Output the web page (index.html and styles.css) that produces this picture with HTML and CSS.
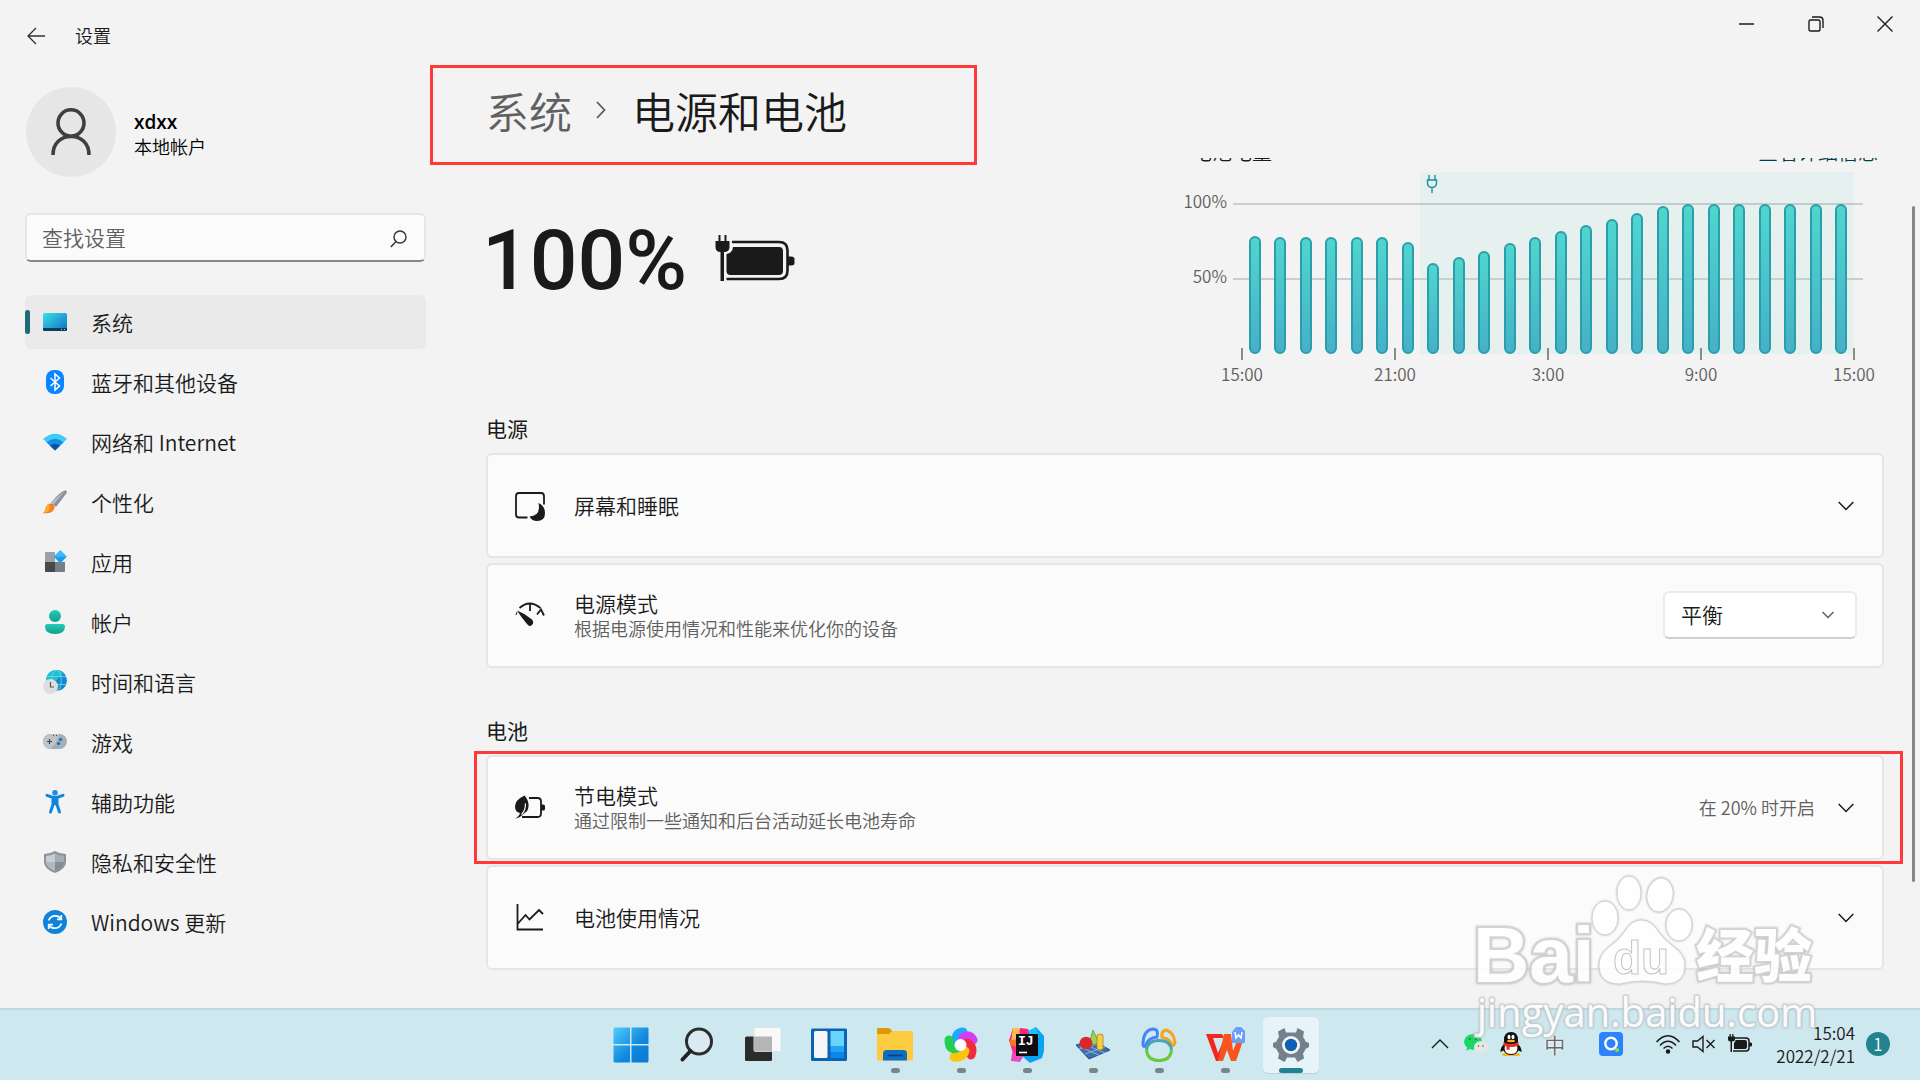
FILE: index.html
```
<!DOCTYPE html>
<html lang="zh-CN">
<head>
  <meta charset="UTF-8">
  <meta name="viewport" content="width=device-width, initial-scale=1.0">
  <title>设置</title>
  <link rel="stylesheet" href="styles.css">
</head>
<body>
  <div class="window">
    <header class="titlebar">
      <button class="back" aria-label="返回">
        <svg width="20" height="18" viewBox="0 0 20 18"><path d="M10 1 2 9l8 8M2 9h17" fill="none" stroke="#333" stroke-width="1.3"/></svg>
      </button>
      <span class="app-title">设置</span>
      <div class="controls">
        <button aria-label="最小化"><svg width="16" height="16"><path d="M0 8h15" stroke="#1a1a1a" stroke-width="1.5"/></svg></button>
        <button aria-label="还原"><svg width="16" height="16" fill="none" stroke="#1a1a1a" stroke-width="1.4"><rect x="1" y="4" width="11" height="11" rx="1.5"/><path d="M4 1h7.500q3.500 0 3.500 3.500V12"/></svg></button>
        <button aria-label="关闭"><svg width="16" height="16"><path d="M.5.5l15 15M15.500.5l-15 15" stroke="#1a1a1a" stroke-width="1.4"/></svg></button>
      </div>
    </header>

    <div class="body">
      <aside class="sidebar">
        <div class="user">
          <div class="avatar">
            <svg width="42" height="48" viewBox="0 0 42 48" fill="none" stroke="#3f3f3f" stroke-width="3.600"><ellipse cx="21" cy="15" rx="13" ry="13.200"/><path d="M3 47c0-12 8-18.500 18-18.500S39 35 39 47"/></svg>
          </div>
          <div>
            <div class="user-name">xdxx</div>
            <div class="user-type">本地帐户</div>
          </div>
        </div>

        <form class="search">
          <input type="text" placeholder="查找设置" aria-label="查找设置">
          <svg width="17" height="18" viewBox="0 0 17 18" fill="none" stroke="#333" stroke-width="1.400"><circle cx="10" cy="7" r="6"/><path d="M6 11.500.8 17"/></svg>
        </form>

        <nav>
          <a href="#" class="active">
            <svg width="24" height="24" viewBox="0 0 24 24"><defs><linearGradient id="sys" x1="0" y1="0" x2="1" y2="1"><stop offset="0" stop-color="#3de0e8"/><stop offset="1" stop-color="#0a6fc2"/></linearGradient></defs><rect y="3" width="24" height="18" rx="1.500" fill="url(#sys)"/><path d="M0 18h24v1.500q0 1.500-1.500 1.500h-21Q0 21 0 19.500z" fill="#0b3c5d"/><path d="M18 19.500h1M21 19.500h1" stroke="#9fd8ee"/></svg>
            系统</a>
          <a href="#">
            <svg width="24" height="24" viewBox="0 0 24 24"><rect x="3" width="18" height="24" rx="8" fill="#0a84ff"/><path d="m7.500 8 9 8-4.500 4V4l4.500 4-9 8" fill="none" stroke="#fff" stroke-width="1.500"/></svg>
            蓝牙和其他设备</a>
          <a href="#">
            <svg width="24" height="24" viewBox="0 0 24 24"><path d="M0 9q12-10.500 24 0L12 20.500z" fill="#3fcbf7"/><path d="M3.500 12.300q8.500-7 17 0L12 20.500z" fill="#1490df"/><path d="M7 15.700q5-4 10 0l-5 4.800z" fill="#0c55a3"/></svg>
            网络和 Internet</a>
          <a href="#">
            <svg width="24" height="24" viewBox="0 0 24 24"><path d="M22.500.3q2 .7 1 3L13 17l-5-4.500Q18 1 22.500.3z" fill="#87929c"/><path d="M22.500.3 8 12.500l2.500 2z" fill="#b6bec6"/><path d="M8 13.500q3.500.5 3.500 4Q11 24 0 23.300q2-1.300 2.500-5 1-5 5.500-4.800z" fill="#f5811e"/><path d="M6 14q-3 1-3.500 4.500Q2 22 0 23.300 9 22 6 14z" fill="#fbb034"/></svg>
            个性化</a>
          <a href="#">
            <svg width="24" height="24" viewBox="0 0 24 24"><path d="M2 3q0-1 1-1h9v10H2z" fill="#99a1a9"/><path d="M2 12h10v10H3q-1 0-1-1z" fill="#44494d"/><path d="M12 12h10v9q0 1-1 1h-9z" fill="#777e86"/><path d="m17.300.3 6.500 6.500-6.500 6.700-6.500-6.700z" fill="#1e9fea"/><path d="m17.300.3 6.500 6.500H10.800z" fill="#3cbcf5"/></svg>
            应用</a>
          <a href="#">
            <svg width="24" height="24" viewBox="0 0 24 24"><defs><linearGradient id="acc" x1="0" y1="0" x2="0" y2="1"><stop offset="0" stop-color="#24cdb4"/><stop offset="1" stop-color="#129e8c"/></linearGradient></defs><circle cx="12" cy="6" r="6" fill="url(#acc)"/><path d="M4.500 14h15q2.500 0 2.500 2.500 0 7.500-10 7.500T2 16.500Q2 14 4.500 14z" fill="url(#acc)"/></svg>
            帐户</a>
          <a href="#">
            <svg width="24" height="24" viewBox="0 0 24 24"><circle cx="13.500" cy="10.500" r="10.500" fill="#1688cf"/><path d="M13.500 0Q3 1 3 10.500h10L21 3q-3-3-7.500-3z" fill="#20bfd2"/><g fill="none" stroke="#5bd9ea" stroke-width=".9"><ellipse cx="13.500" cy="10.500" rx="4.800" ry="10.300"/><path d="M4 6.500h19M4 14.500h19"/></g><circle cx="7.500" cy="16.500" r="7.500" fill="#dedede"/><path d="M7.500 12v5H11" fill="none" stroke="#555" stroke-width="1.200"/></svg>
            时间和语言</a>
          <a href="#">
            <svg width="24" height="24" viewBox="0 0 24 24"><rect y="4" width="24" height="15" rx="7.500" fill="#a5adb5"/><path d="M7.500 4q-7 0-7.500 7.500Q.5 19 7.500 19 15 12 16 4z" fill="#bcc3c9"/><path d="M4 11.500h5M6.500 9v5" stroke="#444" stroke-width="1.200"/><circle cx="17.500" cy="9.500" r="1.600" fill="#0a6fc2"/><circle cx="15.500" cy="13.500" r="1.600" fill="#0a6fc2"/><path d="M10 5.500h1M13 5.500h1" stroke="#444"/></svg>
            游戏</a>
          <a href="#">
            <svg width="24" height="24" viewBox="0 0 24 24"><circle cx="12" cy="2.800" r="2.800" fill="#1a8fe3"/><path d="M4 5.300 10 7.500h4l6-2.200M10 8v6.500L7.500 22M14 8v6.500l2.500 7.500" fill="none" stroke="#0f86dd" stroke-width="3" stroke-linecap="round"/><path d="M9 7h6v9l-3-1-3 1z" fill="#0f86dd"/></svg>
            辅助功能</a>
          <a href="#">
            <svg width="24" height="24" viewBox="0 0 24 24"><path d="M12 1q5 3 11 3v8q0 7-11 11Q1 19 1 12V4q6 0 11-3z" fill="#8b949c"/><path d="M12 3.500q4 2.300 9 2.500v6q0 5.500-9 9z" fill="#a5acb4"/><path d="M12 3.500Q8 5.800 3 6v6h9z" fill="#c8cdd4"/><path d="M3 12h9v9q-9-3.500-9-9z" fill="#b3b9c1"/><path d="M12 12h9q0 5.500-9 9z" fill="#858d95"/></svg>
            隐私和安全性</a>
          <a href="#">
            <svg width="24" height="24" viewBox="0 0 24 24"><circle cx="12" cy="12" r="12" fill="#0f83dc"/><g fill="none" stroke="#fff" stroke-width="1.700"><path d="M5.500 10.500Q7.500 5.800 12.500 5.800q3.500 0 5.500 3M18.500 13.500q-2 4.700-7 4.700-3.500 0-5.500-3"/><path d="M18.300 5v4.300H14M5.700 19v-4.300H10"/></g></svg>
            Windows 更新</a>
        </nav>
      </aside>

      <main>
        <h1 class="breadcrumb">
          <a href="#">系统</a>
          <svg width="12" height="18" viewBox="0 0 12 18"><path d="m2 1 7.500 8L2 17" fill="none" stroke="#5a5a5a" stroke-width="1.800"/></svg>
          <span>电源和电池</span>
        </h1>

        <div class="scroll">
          <div class="hero">
            <div class="level">
              <span>100%</span>
              <svg width="80" height="46" viewBox="0 0 80 46"><path d="M17 7h47q8.500 0 8.500 8.500v20q0 8.500-8.500 8.500H11.500" fill="none" stroke="#1a1a1a" stroke-width="2.600"/><path d="M72.500 21.500H76q3.500 0 3.500 2.500v4q0 2.500-3.500 2.500h-3.500z" fill="#1a1a1a"/><path d="M18 12h46q4 0 4 4v20q0 4-4 4H15.500q-4 0-4-4V19q6-1 6.500-7z" fill="#1a1a1a"/><path d="M3.500 0v6H.5v6q0 5 5 5V46H9V17q5.500 0 5.500-5V6h-3V0h-2v6h-4V0z" fill="#1a1a1a"/></svg>
            </div>
            <div class="chart">
              <div class="chart-head">
                <span>电池电量</span>
                <a href="#">查看详细信息</a>
              </div>
              <div class="chart-area">
                <div class="y-axis"><span>100%</span><span>50%</span></div>
                <div class="plot">
                  <div class="charging">
                    <svg width="12" height="18" viewBox="0 0 12 18" fill="none" stroke="#1a8fa5" stroke-width="1.400"><path d="M3 0v5M9 0v5M1.500 5h9v3q0 4.500-4.500 4.500T1.500 8zM6 12.500V18"/></svg>
                  </div>
                  <div class="bars">
                    <i style="height:79%"></i><i style="height:78%"></i><i style="height:78%"></i><i style="height:78%"></i>
                    <i style="height:78%"></i><i style="height:78%"></i><i style="height:75%"></i><i style="height:61%"></i>
                    <i style="height:65%"></i><i style="height:69%"></i><i style="height:74%"></i><i style="height:78%"></i>
                    <i style="height:82%"></i><i style="height:86%"></i><i style="height:90%"></i><i style="height:94%"></i>
                    <i style="height:99%"></i><i style="height:100%"></i><i style="height:100%"></i><i style="height:100%"></i>
                    <i style="height:100%"></i><i style="height:100%"></i><i style="height:100%"></i><i style="height:100%"></i>
                  </div>
                </div>
              </div>
              <div class="x-axis"><span>15:00</span><span>21:00</span><span>3:00</span><span>9:00</span><span>15:00</span></div>
            </div>
          </div>

          <h2>电源</h2>
          <section class="cards">
            <button class="card">
              <svg class="card-icon" width="30" height="30" viewBox="0 0 30 30"><path d="M12.500 26.500H4Q1 26.500 1 23.500V5q0-3 3-3h22q3 0 3 3v8.500" fill="none" stroke="#1a1a1a" stroke-width="1.800"/><path d="M23.500 12q6.500 3 6.500 10 0 8-8 8-5 0-7.500-4.500Q26 25 23.500 12z" fill="#1a1a1a"/></svg>
              <span class="card-text">屏幕和睡眠</span>
              <svg class="chevron" width="16" height="10" viewBox="0 0 16 10"><path d="m.7 1 7.300 7.500L15.300 1"/></svg>
            </button>
            <div class="card">
              <svg class="card-icon" width="30" height="30" viewBox="0 0 30 30" fill="none" stroke="#1a1a1a" stroke-width="1.800"><path d="M4.500 7Q14.500-2 25.500 7M15 3v7M29 14.500l-3-6-4 5"/><path d="M1 14l1-3" stroke-width="1"/><path d="M2 9.500q8 3 15 9 2.500 3 0 5.500t-5-1Q6 16 2 9.500z" fill="#1a1a1a" stroke="none"/></svg>
              <label class="card-text" for="mode">电源模式<small>根据电源使用情况和性能来优化你的设备</small></label>
              <div class="select">
                <select id="mode"><option>平衡</option><option>最佳性能</option></select>
                <svg class="chevron" width="12" height="8" viewBox="0 0 12 8"><path d="m.5 1 5.500 5.500L11.500 1"/></svg>
              </div>
            </div>
          </section>

          <h2>电池</h2>
          <section class="cards">
            <button class="card marked">
              <svg class="card-icon" width="30" height="30" viewBox="0 0 30 30"><path d="M14 5h8.500Q26 5 26 8.500v12q0 3.500-3.500 3.500H7" fill="none" stroke="#1a1a1a" stroke-width="1.800"/><path d="M26 11.500h2q2 0 2 1.500v3q0 1.500-2 1.500h-2z" fill="#1a1a1a"/><path d="M9.500 2.500q4.500 5 4 11-.5 5-4 6.500Q5 25 0 25.500 4 23.500 5 20q-5-1-5-6.500Q0 7 9.500 2.500z" fill="#1a1a1a"/><path d="M10.500 10.500q0 7-4 11" fill="none" stroke="#fbfbfb" stroke-width="1.200"/></svg>
              <span class="card-text">节电模式<small>通过限制一些通知和后台活动延长电池寿命</small></span>
              <span class="card-value">在 20% 时开启</span>
              <svg class="chevron" width="16" height="10" viewBox="0 0 16 10"><path d="m.7 1 7.300 7.500L15.300 1"/></svg>
            </button>
            <button class="card">
              <svg class="card-icon" width="30" height="30" viewBox="0 0 30 30" fill="none" stroke="#1a1a1a" stroke-width="1.800"><path d="M2.500 1v25.500H28M2.500 21l8-9 4 4.500L24 7l4 4"/></svg>
              <span class="card-text">电池使用情况</span>
              <svg class="chevron" width="16" height="10" viewBox="0 0 16 10"><path d="m.7 1 7.300 7.500L15.300 1"/></svg>
            </button>
          </section>
        </div>
        <div class="scrollbar"></div>
      </main>
    </div>
  </div>

  <footer class="taskbar">
    <div class="apps">
      <button aria-label="开始"><svg width="36" height="36" viewBox="0 0 36 36"><defs><linearGradient id="win" x1="0" y1="0" x2="1" y2="1"><stop offset="0" stop-color="#4fcdfb"/><stop offset=".6" stop-color="#0f86dd"/><stop offset="1" stop-color="#0a78d4"/></linearGradient></defs><path d="M1.500.5H17V17H.5V1.500zM18.500.5H35l.5 1V17h-17zM.5 18.500H17v17H1.500l-1-1zM18.500 18.500h17v16l-1 1h-16z" fill="url(#win)"/></svg></button>
      <button aria-label="搜索"><svg width="36" height="36" viewBox="0 0 36 36"><circle cx="20" cy="14.500" r="12.500" fill="#dbeaf2" stroke="#2d2d2d" stroke-width="3"/><path d="m11.500 24-8 8.500" stroke="#222" stroke-width="4" stroke-linecap="round"/></svg></button>
      <button aria-label="任务视图"><svg width="36" height="36" viewBox="0 0 36 36"><rect y="9.500" width="27" height="24.500" rx="1.500" fill="#2b2b2b"/><rect x="9" y=".5" width="27" height="24" rx="1.500" fill="#f8f8f8" stroke="#e2e2e2"/><path d="M9 9.500h18v15H9z" fill="#b5b5b5"/></svg></button>
      <button aria-label="小组件"><svg width="36" height="36" viewBox="0 0 36 36"><rect y="1.500" width="36" height="32.500" rx="1.500" fill="#0c62b4"/><rect x="3" y="4" width="13.500" height="27" rx="1.500" fill="#f6f6f6"/><path d="M19.500 4H33v15H19.500z" fill="#69d5fc"/><path d="M19.500 19H33v6H19.500z" fill="#20a6f5"/><path d="M19.500 25H33v6H19.500z" fill="#0d86e8"/></svg></button>
      <button class="open" aria-label="文件资源管理器"><svg width="36" height="36" viewBox="0 0 36 36"><path d="M0 2q0-1 1-1h10q2 0 3 1.500L16 5v3H0z" fill="#dc9a06"/><path d="M0 7h12l3-3h20q1 0 1 1v28.500H0z" fill="#fdcb40"/><path d="M6 33.500v-7q0-3.500 3.500-3.500h17q3.500 0 3.500 3.500v7z" fill="#0d6dc0"/><path d="M11 28.500h14" stroke="#073f7c" stroke-width="1.500" stroke-linecap="round"/></svg></button>
      <button class="open" aria-label="浏览器"><svg width="36" height="36" viewBox="0 0 36 36"><g fill="none" stroke-width="9" stroke-linecap="round"><path d="M13 14q-1-8 7-9" stroke="#20a8fb"/><path d="M20 11q6-5 10 2" stroke="#d63df0"/><path d="M24 16q7 4 4 12" stroke="#f12a3d"/><path d="M22 24q-2 7-11 6" stroke="#fcc40c"/><path d="M14 21q-8 3-8-8" stroke="#24cf50"/></g><circle cx="17.500" cy="18" r="6" fill="#fff"/></svg></button>
      <button class="open" aria-label="IntelliJ IDEA"><svg width="36" height="36" viewBox="0 0 36 36"><path d="M4 1 11 3l8 16L2 34 4 27 0 13z" fill="#fb2c8c"/><path d="M4 1h6l2 8-10 7 1-8z" fill="#fdbe4b"/><path d="M0 14l8-2v8l-6-2z" fill="#f97a12"/><path d="m11 1 8 1 4 9-13 1z" fill="#f9237c"/><path d="m20 5 7-5 8 9v15l-2 7-12 5-8-7z" fill="#0ba2f2"/><path d="m3 26 12 2-4 7-9-1z" fill="#e94dc4"/><path d="m27 0 3 10-9-1-2-5z" fill="#17c5f0"/><path d="M7 7h22v22H7z" fill="#110b12"/><path d="M10 25.500h8" stroke="#fff" stroke-width="1.600"/><text x="9" y="18" class="ij">IJ</text></svg></button>
      <button class="open" aria-label="几何画板"><svg width="36" height="36" viewBox="0 0 36 36"><path d="m1 18 17-5 17 10-21 9z" fill="#416fae" stroke="#24508c"/><path d="m5 20 19 8M11 18l19 8M4 22l22-6M10 27l20-7" stroke="#9ec0e4" stroke-width=".8"/><path d="m18 3 6 13q-5 3-10 0z" fill="#9bd35a" stroke="#4d922d" stroke-width=".7"/><circle cx="11" cy="16" r="6.300" fill="#dd252b"/><path d="M22 8q3-2 6 0v14q-3 2-6 0z" fill="#f7cf3e" stroke="#a37d16" stroke-width=".7"/></svg></button>
      <button class="open" aria-label="Navicat"><svg width="36" height="36" viewBox="0 0 36 36" fill="none" stroke-width="3"><path d="M2 18Q2 3 12 2q6 0 4 8-9 1-11 8-2 3-3 0z" stroke="#4585f5"/><path d="M21 10q-1-6 4-7 8 2 9 13-2 5-4 0-2-4-7-5z" stroke="#f5a51a"/><path d="M5.500 23q1-9.500 12.500-9.500T30.500 23" stroke="#47a4b8"/><path d="M5.500 23q1 10.500 12.500 10.500T30.500 23" stroke="#68ca3d"/></svg></button>
      <button class="open" aria-label="WPS"><svg width="40" height="40" viewBox="0 0 40 40"><path d="M1 9h16l2 4H8l5 15 7-16h6L16 36h-5z" fill="#f2251f"/><path d="M19 9h7l2 17 5-13h6l-8 23h-5l-4-11-4 11h-5z" fill="#f95420"/><path d="M27 7l4-5h5l4 4v12H27z" fill="#6b9dfb"/><path d="m30 7 1 6 2.500-3 2.500 3 1-6" fill="none" stroke="#fff" stroke-width="1.500"/></svg></button>
      <button class="open current" aria-label="设置"><svg width="36" height="36" viewBox="0 0 36 36"><path d="M13 5.500 11.500 1 5 4.500l1 5.500q-2 2-2.500 4.500L0 16v4l3.500 2q.7 2.500 2.500 4.500l-1 5L11.500 35l2.500-4.500h8l2.500 4.500 6.500-3.500-1-5q1.800-2 2.500-4.500l3.500-2v-4l-3.500-1.500Q32 12 30 10l1-5.500L24.500 1 23 5.500z" fill="#74808a"/><circle cx="18" cy="18" r="9" fill="#f4f4f4"/><circle cx="18" cy="18" r="6.200" fill="#0b62b5"/></svg></button>
    </div>

    <div class="tray">
      <button aria-label="显示隐藏的图标"><svg width="18" height="10"><path d="m1 9 8-8 8 8" fill="none" stroke="#1a1a1a" stroke-width="1.400"/></svg></button>
      <svg class="wechat" width="24" height="24" viewBox="0 0 24 24"><path d="M9 2q8.500.5 9 8-8 0-7.500 7.500Q8 18 6 17l-3.500 1.500.5-3Q0 13 0 9.500 1 2.500 9 2z" fill="#1ad763"/><ellipse cx="17" cy="15" rx="7" ry="6" fill="#e6e6e6"/><path d="M5 7h1.500M11 7h1.500M14 14h1M18.500 14h1" stroke="#2d5a3b" stroke-width="1.500"/></svg>
      <svg class="qq" width="22" height="24" viewBox="0 0 22 24"><ellipse cx="7" cy="22.500" rx="5" ry="1.500" fill="#f9b51b"/><ellipse cx="15" cy="22.500" rx="5" ry="1.500" fill="#f9b51b"/><path d="M11 0q7 0 7 8v4q4 4 3.500 8l-3-1.500Q16 23 11 23t-7.500-4.500l-3 1.500Q0 16 4 12V8q0-8 7-8z" fill="#111"/><path d="M5 13h12q2 9-6 9t-6-9z" fill="#fff"/><path d="M3.500 10q7.500 4 15 0v3.500q-4 2-9 1.500v3l-3-.5v-3l-3-1z" fill="#e92d25"/><ellipse cx="9" cy="5" rx="1.500" ry="2.200" fill="#fff"/><ellipse cx="13" cy="5" rx="1.500" ry="2.200" fill="#fff"/><ellipse cx="11" cy="9" rx="4" ry="1.200" fill="#f9b51b"/></svg>
      <span class="ime">中</span>
      <svg class="q" width="24" height="24" viewBox="0 0 24 24"><rect width="24" height="24" rx="4" fill="#2c83fb"/><circle cx="12" cy="11.500" r="5.700" fill="none" stroke="#fff" stroke-width="2.400"/><circle cx="18" cy="18" r="2" fill="#8de23c"/></svg>
      <svg class="wifi" width="24" height="20" viewBox="0 0 24 20" fill="none" stroke="#1a1a1a" stroke-width="1.500"><path d="M.5 8q11.500-12.500 23 0M4 11.500q8-8.500 16 0M7.500 14.500q4.500-4.500 9 0"/><circle cx="12" cy="17.500" r="1.500" fill="#1a1a1a"/></svg>
      <svg class="sound" width="24" height="18" viewBox="0 0 24 18" fill="none" stroke="#1a1a1a" stroke-width="1.400"><path d="M1 6h4.500L11 1.500v15L5.500 12H1zM14.500 5l8 8M22.500 5l-8 8"/></svg>
      <svg width="24" height="20" viewBox="0 0 24 20"><path d="M6.500 4H18q3 0 3 3v7q0 3-3 3H5" fill="none" stroke="#1a1a1a" stroke-width="1.500"/><path d="M7.500 6H17q2 0 2 2v5q0 2-2 2H6V9q1.500-1 1.500-3zM21 8.500h1.500q1.500 0 1.500 1v2q0 1-1.500 1H21zM1.500 0v2.500H0V5q0 2.500 2.500 2.500V18H4V7.500Q7 7.500 7 5V2.500H5.500V0H4.200v2.500H2.800V0z" fill="#1a1a1a"/></svg>
      <time><span>15:04</span><span>2022/2/21</span></time>
      <span class="badge">1</span>
    </div>
  </footer>

  <svg class="watermark" width="360" height="180" viewBox="0 0 360 180">
    <text x="3" y="112" class="wm-bai">Bai</text>
    <ellipse cx="135" cy="48" rx="13" ry="17"/>
    <ellipse cx="159" cy="23" rx="12" ry="17"/>
    <ellipse cx="190" cy="25" rx="13" ry="17" transform="rotate(10 190 25)"/>
    <ellipse cx="209" cy="55" rx="13" ry="16"/>
    <path d="M171 50q10 0 17 11 6 9 16 16 11 8 11 18 0 19-20 19-12-3-23-3t-22 3q-21 0-21-19 0-10 10-18 10-7 16-16 7-11 16-11z"/>
    <text x="143" y="104" class="wm-du">du</text>
    <text x="226" y="107" class="wm-cn">经验</text>
    <text x="7" y="157" class="wm-url">jingyan.baidu.com</text>
  </svg>
</body>
</html>
```
FILE: styles.css
```
*, *::before, *::after { box-sizing: border-box; }
body {
  margin: 0;
  height: 100vh;
  display: flex;
  flex-direction: column;
  overflow: hidden;
  background: #f3f3f3;
  color: #1a1a1a;
  font-family: "Noto Sans CJK SC", "Open Sans", sans-serif;
  font-size: 21px;
  font-weight: 350;
}
a { color: inherit; text-decoration: none; }
button {
  font: inherit;
  color: inherit;
  background: none;
  border: none;
  padding: 0;
}
svg { flex: none; display: block; }

.window { flex: 1; min-height: 0; display: flex; flex-direction: column; }

/* title bar */
.titlebar { display: flex; height: 65px; flex: none; padding-left: 26px; }
.back { height: 72px; }
.app-title { margin-left: 29px; line-height: 70px; font-size: 18px; }
.controls { display: flex; margin-left: auto; padding-right: 1px; }
.controls button {
  width: 69px;
  height: 47px;
  display: flex;
  align-items: center;
  justify-content: center;
}

.body { flex: 1; min-height: 0; display: flex; }

/* left column */
.sidebar { width: 426px; flex: none; padding: 22px 0 0 25px; }
.user { display: flex; align-items: center; gap: 18px; padding-left: 1px; }
.avatar {
  width: 90px;
  height: 90px;
  border-radius: 50%;
  background: #e6e6e6;
  display: flex;
  align-items: center;
  justify-content: center;
}
.user-name {
  margin-top: 3px;
  font-family: "Open Sans", sans-serif;
  font-size: 19px;
  font-weight: 600;
  line-height: 24px;
  color: #000;
}
.user-type { font-size: 18px; line-height: 24px; color: #000; }

.search { position: relative; margin: 36px 0 33px; }
.search input {
  width: 100%;
  height: 49px;
  padding: 0 50px 2px 15px;
  border: 2px solid #e6e6e6;
  border-bottom-color: #868686;
  border-radius: 6px;
  background: #fbfbfb;
  font: inherit;
}
.search input::placeholder { color: #606060; opacity: 1; }
.search svg { position: absolute; right: 19px; top: 17px; }

nav { display: flex; flex-direction: column; gap: 6px; }
nav a {
  display: flex;
  align-items: center;
  gap: 24px;
  height: 54px;
  padding-left: 18px;
  border-radius: 6px;
  position: relative;
}
nav a.active { background: #eaeaea; }
nav a.active::before {
  content: "";
  position: absolute;
  left: 0;
  top: 15px;
  width: 5px;
  height: 24px;
  border-radius: 3px;
  background: #1e6b78;
}

/* right column */
main { flex: 1; min-width: 0; display: flex; flex-direction: column; position: relative; }
.breadcrumb {
  position: relative;
  z-index: 1;
  flex: none;
  display: flex;
  align-items: center;
  height: 93px;
  margin: 0 0 0 60px;
  padding-bottom: 4px;
  font-size: 43px;
  font-weight: 350;
}
.breadcrumb a { color: #606060; }
.breadcrumb svg { margin: 0 25px 0 23px; }
.breadcrumb::after {
  content: "";
  position: absolute;
  left: -56px;
  top: 0;
  width: 547px;
  height: 100px;
  border: 3px solid #ff3838;
}
.scroll { flex: 1; min-height: 0; overflow: hidden; padding: 0 36px 0 60px; }
.scrollbar {
  position: absolute;
  right: 5px;
  top: 141px;
  bottom: 126px;
  width: 3px;
  border-radius: 2px;
  background: #868686;
}

.hero { display: flex; justify-content: space-between; }
.level { display: flex; align-items: flex-start; gap: 28px; padding-top: 60px; }
.level span {
  margin-left: -4px;
  font-family: Roboto, sans-serif;
  font-size: 84px;
  font-weight: 500;
  line-height: 86px;
}
.level svg { margin-top: 17px; }

.chart { width: 701px; padding-right: 1px; font-size: 17px; color: #606060; }
.chart-head {
  display: flex;
  justify-content: space-between;
  margin-top: -18px;
  padding: 0 5px 0 9px;
  height: 32px;
  font-size: 20px;
  line-height: 24px;
  color: #1a1a1a;
}
.chart-head a { color: #003e4a; }
.chart-area { display: flex; height: 182px; }
.y-axis {
  width: 44px;
  margin-right: 6px;
  padding-top: 19px;
  display: flex;
  flex-direction: column;
  gap: 55px;
  line-height: 20px;
  text-align: right;
}
.plot { position: relative; width: 630px; padding: 32px 9px 0; }
.plot::before, .plot::after {
  content: "";
  position: absolute;
  left: 0;
  right: 0;
  top: 31px;
  height: 2px;
  background: #c9cfcf;
}
.plot::after { top: 106px; }
.charging {
  position: absolute;
  left: 187px;
  right: 9px;
  top: 0;
  bottom: 0;
  padding: 3px 6px;
  background: rgba(80, 200, 180, .08);
}
.bars { position: relative; z-index: 1; display: flex; justify-content: space-around; align-items: flex-end; height: 150px; }
.bars i {
  width: 12px;
  border: 2px solid #2b9eac;
  border-radius: 6px;
  background: linear-gradient(#4fd6cd, #46b0c8);
}
.x-axis { position: relative; z-index: 1; display: flex; justify-content: space-between; margin: -6px 0 0 30px; line-height: 20px; }
.x-axis span { width: 58px; text-align: center; }
.x-axis span::before {
  content: "";
  display: block;
  width: 2px;
  height: 12px;
  margin: 0 auto 4px;
  background: #8a8a8a;
}

h2 { margin: 50px 0 13px; font-size: 21px; font-weight: 400; line-height: 24px; }
.hero + h2 { margin-top: 32px; }
.cards { display: flex; flex-direction: column; gap: 5px; }
.card {
  position: relative;
  display: flex;
  align-items: center;
  width: 100%;
  height: 105px;
  padding: 0 28px 0 27px;
  border: 2px solid #e5e5e5;
  border-radius: 6px;
  background: #fbfbfb;
  text-align: left;
}
.card-text { flex: 1; margin-left: 29px; line-height: 27px; }
.card-text small { display: block; padding-bottom: 2px; font-size: 18px; line-height: 23px; color: #606060; }
.card-value { margin-right: 23px; padding-bottom: 2px; font-size: 18px; color: #606060; }
.chevron { fill: none; stroke: #1a1a1a; stroke-width: 1.5px; }
.marked::after {
  content: "";
  position: absolute;
  z-index: 1;
  inset: -6px -21px -6px -14px;
  border: 3px solid #ff3838;
}
.select { position: relative; margin-right: -3px; padding-bottom: 2px; }
.select select {
  appearance: none;
  display: block;
  width: 194px;
  height: 48px;
  padding: 0 16px 2px;
  border: 2px solid #ebebeb;
  border-bottom-color: #d0d0d0;
  border-radius: 6px;
  background: #fff;
  color: inherit;
  font: inherit;
}
.select .chevron { position: absolute; right: 23px; top: 20px; stroke: #606060; }

/* taskbar */
.taskbar {
  flex: none;
  display: grid;
  grid-template-columns: 1fr auto 1fr;
  height: 72px;
  border-top: 2px solid #bbd9df;
  background: #cee8ef;
}
.apps { grid-column: 2; display: flex; gap: 10px; padding: 7px 0 0 2px; }
.apps button {
  position: relative;
  display: flex;
  align-items: center;
  justify-content: center;
  width: 56px;
  height: 56px;
  border-radius: 5px;
}
.apps .open::after {
  content: "";
  position: absolute;
  bottom: 0;
  width: 9px;
  height: 5px;
  border-radius: 3px;
  background: #788589;
}
.apps .current { background: #e6f3f8; box-shadow: 0 1px 1px #b5d2da; }
.apps .current::after { width: 24px; background: #21838f; }
.ij { font: bold 13px "Liberation Mono", monospace; fill: #fff; }

.tray { display: flex; align-items: center; justify-content: flex-end; padding: 0 30px 2px 0; }
.wechat { margin-left: 15px; }
.qq { margin-left: 12px; }
.ime { margin-left: 22px; font-size: 21px; color: #666; text-shadow: 0 0 2px #fff, 0 0 2px #fff; }
.q { margin-left: 34px; }
.wifi { margin-left: 33px; }
.sound { margin: 0 12px; }
.tray time { display: flex; flex-direction: column; margin-left: 24px; font-size: 17px; line-height: 23px; text-align: right; }
.badge {
  width: 24px;
  height: 24px;
  margin-left: 11px;
  border-radius: 50%;
  background: #21838f;
  color: #fff;
  font-size: 17px;
  line-height: 23px;
  text-align: center;
}

.watermark {
  position: absolute;
  right: 90px;
  bottom: 30px;
  z-index: 2;
  fill: #fff;
  stroke: #ccc;
  stroke-width: 1px;
  opacity: .85;
  filter: drop-shadow(0 0 1px #aaa);
  pointer-events: none;
}
.wm-bai { font: bold 78px "Liberation Sans", sans-serif; stroke-width: 4px; paint-order: stroke; }
.wm-du { font: bold 46px "Liberation Sans", sans-serif; stroke: #bbb; }
.wm-cn { font: 900 58px "Noto Sans CJK SC", sans-serif; stroke-width: 3px; paint-order: stroke; }
.wm-url { font: 500 40px "Open Sans", sans-serif; stroke-width: 2px; paint-order: stroke; }
```
